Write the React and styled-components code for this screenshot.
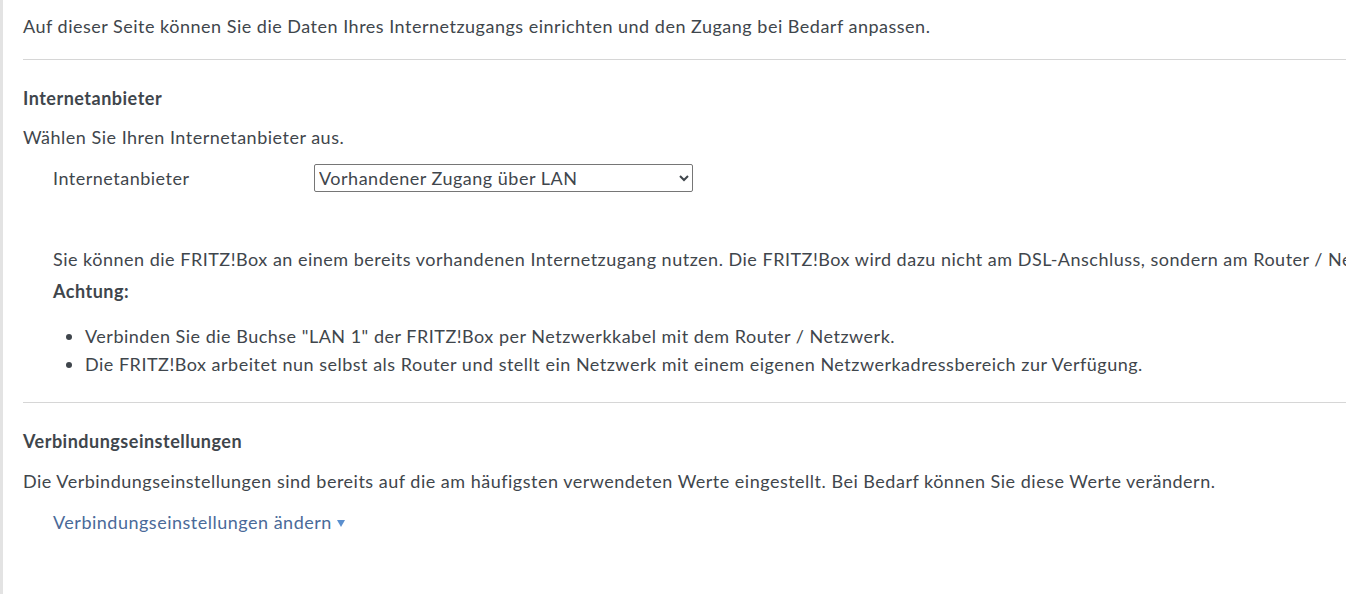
import React from "react";
import styled, { createGlobalStyle } from "styled-components";

const GlobalStyle = createGlobalStyle`
	html, body {
		margin: 0;
		padding: 0;
		background: #fff;
		overflow: hidden;
	}
	body {
		font-family: Lato, "Liberation Sans", sans-serif;
		font-size: 18px;
		letter-spacing: 0.5px;
		color: #3f464c;
	}
`;

const Page = styled.div`
	display: flex;
	min-height: 594px;
`;

const SideBar = styled.div`
	width: 3px;
	flex-shrink: 0;
	background: #e3e3e3;
`;

const Content = styled.div`
	flex: 1;
	padding: 12px 0 0 20px;
	min-width: 0;
	overflow: hidden;
`;

const Text = styled.p`
	margin: 0;
	margin-top: ${(props) => props.top || "0"};
	padding-left: ${(props) => (props.indent ? "30px" : "0")};
	line-height: 28px;
	white-space: nowrap;
	font-weight: ${(props) => (props.bold ? 700 : 400)};
`;

const Rule = styled.hr`
	margin: ${(props) => props.top} 0 0 0;
	border: none;
	border-top: 1px solid #d6d6d6;
	height: 0;
`;

const Heading = styled.h2`
	margin: 24px 0 0 0;
	font-size: 18px;
	font-weight: 700;
	line-height: 28px;
`;

const FieldRow = styled.div`
	display: flex;
	align-items: center;
	margin-top: 13px;
	padding-left: 30px;
`;

const FieldLabel = styled.label`
	width: 261px;
	line-height: 28px;
`;

const Select = styled.select`
	width: 379px;
	height: 28px;
	font-family: inherit;
	font-size: 18px;
	letter-spacing: 0.5px;
	color: #3f464c;
	border: 1px solid #767676;
	border-radius: 2px;
	background: #fff;
	padding: 0;
`;

const List = styled.ul`
	margin: 17px 0 0 0;
	padding-left: 62px;
	line-height: 28px;
`;

const Link = styled.a`
	display: inline-flex;
	align-items: center;
	gap: 5px;
	margin: 13px 0 0 30px;
	line-height: 28px;
	color: #4a6a99;
	text-decoration: none;
	cursor: pointer;
`;

const Arrow = styled.span`
	display: inline-block;
	width: 0;
	height: 0;
	margin-top: 3px;
	border-left: 4.5px solid transparent;
	border-right: 4.5px solid transparent;
	border-top: 7px solid #5b8fce;
`;

export default function App() {
	return (
		<>
			<GlobalStyle />
			<Page>
				<SideBar />
				<Content>
					<Text>
						Auf dieser Seite können Sie die Daten Ihres Internetzugangs einrichten und den Zugang bei Bedarf anpassen.
					</Text>
					<Rule top='19px' />

					<Heading>Internetanbieter</Heading>
					<Text top='11px'>Wählen Sie Ihren Internetanbieter aus.</Text>
					<FieldRow>
						<FieldLabel htmlFor='provider'>Internetanbieter</FieldLabel>
						<Select id='provider' defaultValue='lan'>
							<option value='lan'>Vorhandener Zugang über LAN</option>
						</Select>
					</FieldRow>

					<Text indent top='53px'>
						Sie können die FRITZ!Box an einem bereits vorhandenen Internetzugang nutzen. Die FRITZ!Box wird dazu nicht am DSL-Anschluss, sondern am Router / Netzwerk angeschlossen.
					</Text>
					<Text indent bold top='4px'>Achtung:</Text>
					<List>
						<li>Verbinden Sie die Buchse "LAN 1" der FRITZ!Box per Netzwerkkabel mit dem Router / Netzwerk.</li>
						<li>Die FRITZ!Box arbeitet nun selbst als Router und stellt ein Netzwerk mit einem eigenen Netzwerkadressbereich zur Verfügung.</li>
					</List>
					<Rule top='24px' />

					<Heading>Verbindungseinstellungen</Heading>
					<Text top='12px'>
						Die Verbindungseinstellungen sind bereits auf die am häufigsten verwendeten Werte eingestellt. Bei Bedarf können Sie diese Werte verändern.
					</Text>
					<Link>
						Verbindungseinstellungen ändern
						<Arrow />
					</Link>
				</Content>
			</Page>
		</>
	);
}
